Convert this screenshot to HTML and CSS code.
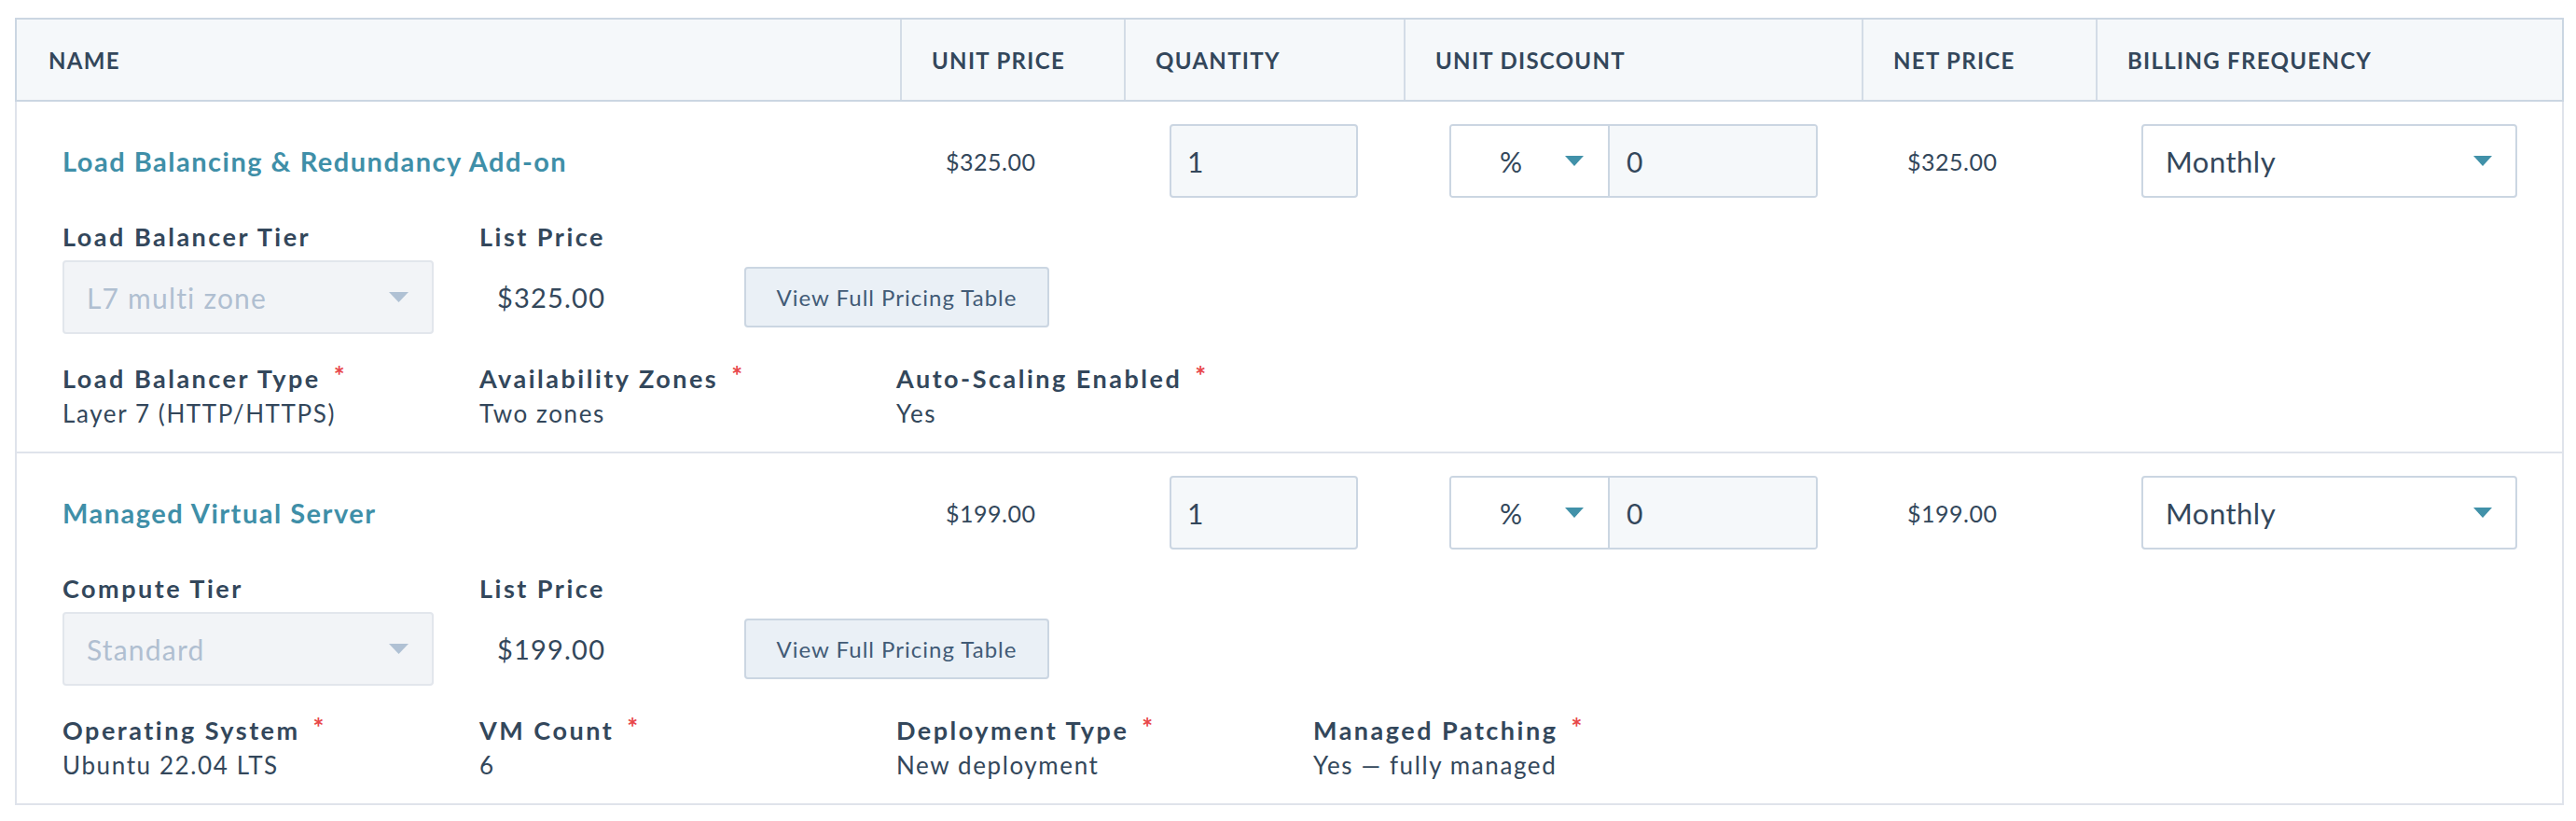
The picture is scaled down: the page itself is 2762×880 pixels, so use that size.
FILE: index.html
```html
<!DOCTYPE html>
<html>
<head>
<meta charset="utf-8">
<link rel="stylesheet" href="styles.css">
</head>
<body>
<div class="table">
  <div class="head">
    <div class="hcell">NAME</div>
    <div class="hcell">UNIT PRICE</div>
    <div class="hcell">QUANTITY</div>
    <div class="hcell">UNIT DISCOUNT</div>
    <div class="hcell">NET PRICE</div>
    <div class="hcell last">BILLING FREQUENCY</div>
  </div>
  <div class="body">
    <div class="row">
      <div class="main">
        <div class="cell name-cell"><span class="pname">Load Balancing &amp; Redundancy Add-on</span></div>
        <div class="cell price">$325.00</div>
        <div class="cell"><div class="qty">1</div></div>
        <div class="cell">
          <div class="disc">
            <div class="disc-sel"><span class="pct">%</span><svg class="arrow" width="20" height="11" viewBox="0 0 20 11"><polygon points="0,0 20,0 10,11"/></svg></div>
            <div class="disc-val">0</div>
          </div>
        </div>
        <div class="cell price">$325.00</div>
        <div class="cell"><div class="bill"><span>Monthly</span><svg class="arrow" width="20" height="11" viewBox="0 0 20 11"><polygon points="0,0 20,0 10,11"/></svg></div></div>
      </div>
      <div class="details">
        <div class="dtop">
          <div class="tier">
            <div class="dlabel">Load Balancer Tier</div>
            <div class="tsel"><span>L7 multi zone</span><svg class="arrow dis" width="21" height="11" viewBox="0 0 21 11"><polygon points="0,0 21,0 10.5,11"/></svg></div>
          </div>
          <div class="lp">
            <div class="dlabel">List Price</div>
            <div class="lprow"><div class="lpval">$325.00</div><div class="btn">View Full Pricing Table</div></div>
          </div>
        </div>
        <div class="props">
          <div class="prop"><div class="plabel">Load Balancer Type<span class="req">*</span></div><div class="pval">Layer 7 (HTTP/HTTPS)</div></div>
          <div class="prop"><div class="plabel">Availability Zones<span class="req">*</span></div><div class="pval">Two zones</div></div>
          <div class="prop"><div class="plabel">Auto-Scaling Enabled<span class="req">*</span></div><div class="pval">Yes</div></div>
        </div>
      </div>
    </div>
    <div class="row">
      <div class="main">
        <div class="cell name-cell"><span class="pname">Managed Virtual Server</span></div>
        <div class="cell price">$199.00</div>
        <div class="cell"><div class="qty">1</div></div>
        <div class="cell">
          <div class="disc">
            <div class="disc-sel"><span class="pct">%</span><svg class="arrow" width="20" height="11" viewBox="0 0 20 11"><polygon points="0,0 20,0 10,11"/></svg></div>
            <div class="disc-val">0</div>
          </div>
        </div>
        <div class="cell price">$199.00</div>
        <div class="cell"><div class="bill"><span>Monthly</span><svg class="arrow" width="20" height="11" viewBox="0 0 20 11"><polygon points="0,0 20,0 10,11"/></svg></div></div>
      </div>
      <div class="details">
        <div class="dtop">
          <div class="tier">
            <div class="dlabel">Compute Tier</div>
            <div class="tsel"><span>Standard</span><svg class="arrow dis" width="21" height="11" viewBox="0 0 21 11"><polygon points="0,0 21,0 10.5,11"/></svg></div>
          </div>
          <div class="lp">
            <div class="dlabel">List Price</div>
            <div class="lprow"><div class="lpval">$199.00</div><div class="btn">View Full Pricing Table</div></div>
          </div>
        </div>
        <div class="props">
          <div class="prop"><div class="plabel">Operating System<span class="req">*</span></div><div class="pval">Ubuntu 22.04 LTS</div></div>
          <div class="prop"><div class="plabel">VM Count<span class="req">*</span></div><div class="pval">6</div></div>
          <div class="prop"><div class="plabel">Deployment Type<span class="req">*</span></div><div class="pval">New deployment</div></div>
          <div class="prop"><div class="plabel">Managed Patching<span class="req">*</span></div><div class="pval">Yes — fully managed</div></div>
        </div>
      </div>
    </div>
  </div>
</div>
</body>
</html>
```
FILE: styles.css
```css
* { box-sizing: border-box; }
html, body { margin: 0; padding: 0; background: #fff; }
body {
  font-family: Lato, "Liberation Sans", sans-serif;
  color: #33475b;
}
.table {
  margin: 19px 0 0 16px;
  width: 2733px;
}
.head {
  display: grid;
  grid-template-columns: 949px 240px 300px 491px 251px 498px;
  border: 2px solid #cbd6e2;
  background: #f5f8fa;
  height: 90px;
}
.hcell {
  display: flex;
  align-items: center;
  padding-left: 32px;
  border-right: 2px solid #d3dce6;
  font-size: 24px;
  font-weight: 700;
  letter-spacing: 1.3px;
  color: #33475b;
}
.hcell:first-child { padding-left: 34px; }
.hcell.last { border-right: none; }
.body {
  border-left: 2px solid #dfe3eb;
  border-right: 2px solid #dfe3eb;
}
.row {
  border-bottom: 2px solid #dfe3eb;
  padding-bottom: 26px;
}
.main {
  display: grid;
  grid-template-columns: 949px 240px 300px 491px 251px 498px;
  padding-top: 24px;
  height: 103px;
}
.cell {
  display: flex;
  align-items: center;
  padding-left: 47px;
}
.name-cell { padding-left: 49px; }
.pname {
  font-size: 29px;
  font-weight: 700;
  letter-spacing: 1.5px;
  color: #3f8fa8;
}
.price { font-size: 25px; letter-spacing: 0.5px; }
.qty {
  width: 202px;
  height: 79px;
  background: #f5f8fa;
  border: 2px solid #cbd6e2;
  border-radius: 4px;
  display: flex;
  align-items: center;
  padding-left: 17px;
  font-size: 30px;
}
.disc {
  display: flex;
  width: 395px;
  height: 79px;
  border: 2px solid #cbd6e2;
  border-radius: 4px;
  overflow: hidden;
}
.disc-sel {
  width: 170px;
  background: #fff;
  border-right: 2px solid #cbd6e2;
  display: flex;
  align-items: center;
  padding-left: 52px;
  font-size: 30px;
}
.pct { width: 70px; }
.disc-val {
  flex: 1;
  background: #f5f8fa;
  display: flex;
  align-items: center;
  padding-left: 18px;
  font-size: 30px;
}
.arrow { fill: #4191a9; display: block; }
.arrow.dis { fill: #b0c1d4; }
.bill {
  width: 403px;
  height: 79px;
  border: 2px solid #cbd6e2;
  border-radius: 4px;
  background: #fff;
  display: flex;
  align-items: center;
  justify-content: space-between;
  padding: 0 25px 0 24px;
  font-size: 31px;
  letter-spacing: 0.5px;
}
.details {
  padding-left: 49px;
  margin-top: 26px;
}
.dtop {
  display: flex;
  gap: 49px;
}
.tier { width: 398px; }
.dlabel {
  font-size: 27px;
  font-weight: 700;
  letter-spacing: 2.5px;
  line-height: 32px;
  margin-bottom: 9px;
}
.tsel {
  height: 79px;
  background: #f2f4f7;
  border: 2px solid #e2e6ec;
  border-radius: 4px;
  display: flex;
  align-items: center;
  justify-content: space-between;
  padding: 0 25px 0 24px;
  font-size: 30px;
  letter-spacing: 1.2px;
  color: #b0bfd1;
}
.lprow {
  display: flex;
  align-items: center;
  height: 79px;
}
.lpval {
  width: 284px;
  padding-left: 19px;
  font-size: 29px;
  letter-spacing: 1.2px;
}
.btn {
  width: 327px;
  height: 65px;
  background: #eaf0f6;
  border: 2px solid #cbd6e2;
  border-radius: 4px;
  display: flex;
  align-items: center;
  justify-content: center;
  font-size: 24px;
  letter-spacing: 1px;
  color: #425b76;
}
.props {
  display: grid;
  grid-template-columns: 447px 447px 447px 447px;
  margin-top: 33px;
}
.plabel {
  font-size: 27px;
  font-weight: 700;
  letter-spacing: 2.5px;
  line-height: 30px;
  margin-bottom: 7px;
}
.req {
  color: #e8474a;
  font-size: 28px;
  line-height: 0;
  letter-spacing: 0;
  margin-left: 14px;
  vertical-align: 3px;
}
.pval {
  font-size: 26px;
  letter-spacing: 1.6px;
  line-height: 30px;
}
```
